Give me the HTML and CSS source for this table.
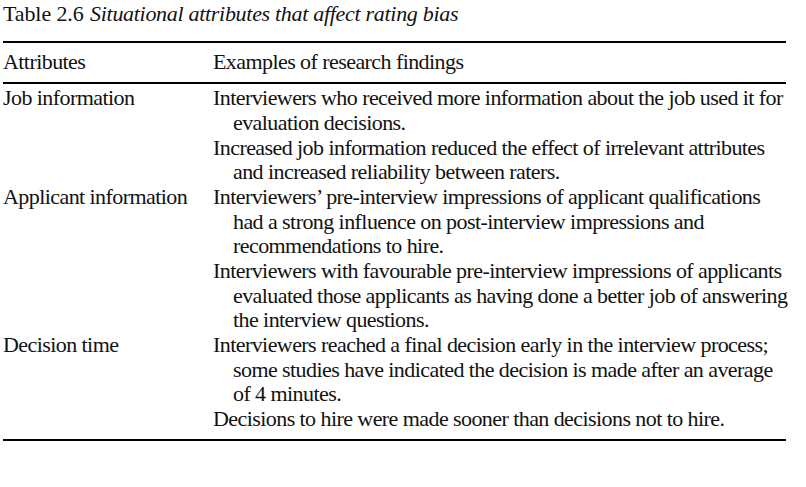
FILE: index.html
```html
<!DOCTYPE html>
<html>
<head>
<meta charset="utf-8">
<link rel="stylesheet" href="styles.css">
</head>
<body>
<div class="page">
  <div class="caption"><span class="num">Table 2.6</span> <em>Situational attributes that affect rating bias</em></div>
  <div class="table">
    <div class="head">
      <div class="c1">Attributes</div>
      <div class="c2">Examples of research findings</div>
    </div>
    <div class="body">
      <div class="row">
        <div class="c1">Job information</div>
        <div class="c2">
          <p>Interviewers who received more information about the job used it for<br>evaluation decisions.</p>
          <p>Increased job information reduced the effect of irrelevant attributes<br>and increased reliability between raters.</p>
        </div>
      </div>
      <div class="row">
        <div class="c1">Applicant information</div>
        <div class="c2">
          <p>Interviewers’ pre-interview impressions of applicant qualifications<br>had a strong influence on post-interview impressions and<br>recommendations to hire.</p>
          <p>Interviewers with favourable pre-interview impressions of applicants<br>evaluated those applicants as having done a better job of answering<br>the interview questions.</p>
        </div>
      </div>
      <div class="row">
        <div class="c1">Decision time</div>
        <div class="c2">
          <p>Interviewers reached a final decision early in the interview process;<br>some studies have indicated the decision is made after an average<br>of 4 minutes.</p>
          <p>Decisions to hire were made sooner than decisions not to hire.</p>
        </div>
      </div>
    </div>
  </div>
</div>
</body>
</html>
```

FILE: styles.css
```css
html, body {
  margin: 0;
  padding: 0;
  background: #fff;
}
body {
  font-family: "Liberation Serif", "Times New Roman", serif;
  font-size: 22px;
  letter-spacing: -0.57px;
  line-height: 24.65px;
  color: #121212;
}
.page {
  padding: 2px 0 0 3px;
  width: 783px;
}
.caption {
  white-space: nowrap;
  line-height: 24.5px;
  letter-spacing: -0.1px;
}
.caption .num {
  margin-right: 1px;
}
.caption em {
  font-style: italic;
  letter-spacing: -0.3px;
}
.table {
  margin-top: 14.5px;
  border-top: 2px solid #000;
  border-bottom: 2px solid #000;
}
.head {
  display: grid;
  grid-template-columns: 210px 1fr;
  padding: 7.25px 0 7.1px;
  border-bottom: 2px solid #000;
}
.body {
  padding: 2.45px 0 7px;
}
.row {
  display: grid;
  grid-template-columns: 210px 1fr;
}
.c1, .c2 p {
  white-space: nowrap;
}
.c2 p {
  margin: 0;
  padding-left: 20px;
  text-indent: -20px;
}
```
